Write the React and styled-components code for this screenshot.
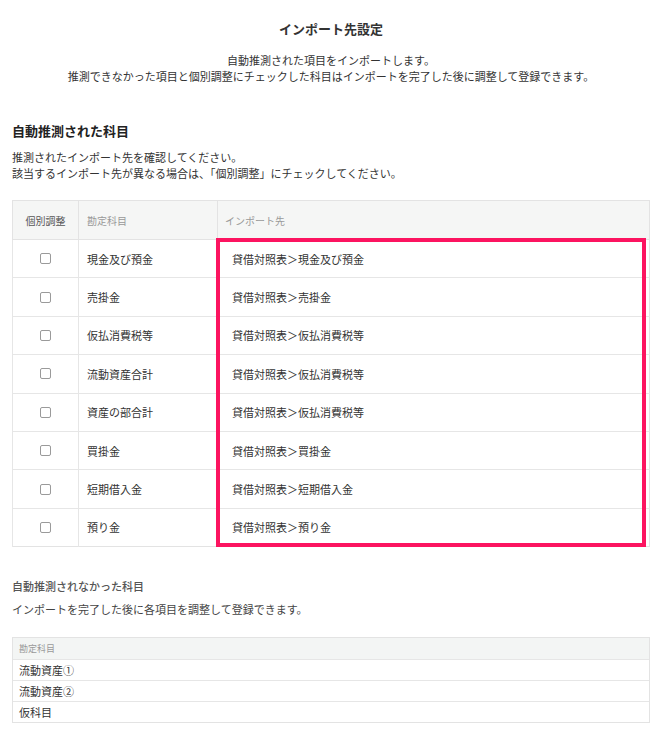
import { styled, createGlobalStyle } from "styled-components";

const GlobalStyle = createGlobalStyle`
  body {
    margin: 0;
    background: #ffffff;
    font-family: "Noto Sans CJK JP", "Noto Sans", sans-serif;
    color: #333333;
  }
`;

const autoRows = [
  { name: "現金及び預金", target: "貸借対照表＞現金及び預金" },
  { name: "売掛金", target: "貸借対照表＞売掛金" },
  { name: "仮払消費税等", target: "貸借対照表＞仮払消費税等" },
  { name: "流動資産合計", target: "貸借対照表＞仮払消費税等" },
  { name: "資産の部合計", target: "貸借対照表＞仮払消費税等" },
  { name: "買掛金", target: "貸借対照表＞買掛金" },
  { name: "短期借入金", target: "貸借対照表＞短期借入金" },
  { name: "預り金", target: "貸借対照表＞預り金" },
];

const manualRows = ["流動資産①", "流動資産②", "仮科目"];

const App = () => {
  return (
    <Page>
      <GlobalStyle />
      <Title>インポート先設定</Title>
      <Lead>
        自動推測された項目をインポートします。
        <br />
        推測できなかった項目と個別調整にチェックした科目はインポートを完了した後に調整して登録できます。
      </Lead>

      <SectionTitle>自動推測された科目</SectionTitle>
      <Note>
        推測されたインポート先を確認してください。
        <br />
        該当するインポート先が異なる場合は、「個別調整」にチェックしてください。
      </Note>

      <TableWrap>
        <Table>
          <colgroup>
            <col style={{ width: 66 }} />
            <col style={{ width: 139 }} />
            <col />
          </colgroup>
          <thead>
            <tr>
              <Th $center $dark>個別調整</Th>
              <Th>勘定科目</Th>
              <Th $wide>インポート先</Th>
            </tr>
          </thead>
          <tbody>
            {autoRows.map((row) => (
              <tr key={row.name}>
                <Td $center>
                  <Check type="checkbox" />
                </Td>
                <Td>{row.name}</Td>
                <Td $wide>{row.target}</Td>
              </tr>
            ))}
          </tbody>
        </Table>
        <Highlight />
      </TableWrap>

      <SubTitle>自動推測されなかった科目</SubTitle>
      <SubNote>インポートを完了した後に各項目を調整して登録できます。</SubNote>

      <ListTable>
        <ListHead>勘定科目</ListHead>
        {manualRows.map((name) => (
          <ListRow key={name}>{name}</ListRow>
        ))}
      </ListTable>
    </Page>
  );
};

const Page = styled.div`
  display: flex;
  flex-direction: column;
  padding: 20px 13px 11px 12px;
`;

const Title = styled.h1`
  margin: 0;
  text-align: center;
  font-size: 13px;
  line-height: 18px;
  font-weight: 700;
  color: #333;
`;

const Lead = styled.p`
  margin: 14px 0 0;
  text-align: center;
  font-size: 11px;
  line-height: 16px;
  color: #333;
`;

const SectionTitle = styled.h2`
  margin: 38px 0 0;
  font-size: 13px;
  line-height: 18px;
  font-weight: 700;
  color: #222;
`;

const Note = styled.p`
  margin: 9px 0 0;
  font-size: 11px;
  line-height: 16px;
  color: #333;
`;

const TableWrap = styled.div`
  position: relative;
  margin-top: 19px;
`;

const Table = styled.table`
  width: 100%;
  border-collapse: collapse;
  table-layout: fixed;
  border: 1px solid #e3e3e3;
`;

const Th = styled.th`
  height: 38px;
  padding: 0 ${({ $wide }) => ($wide ? "7px" : "8px")};
  background: #f5f6f5;
  border: 1px solid #e3e3e3;
  text-align: ${({ $center }) => ($center ? "center" : "left")};
  font-size: 10px;
  font-weight: 400;
  color: ${({ $dark }) => ($dark ? "#555" : "#999")};
`;

const Td = styled.td`
  height: 37.4px;
  padding: 0 ${({ $wide }) => ($wide ? "14px" : "8px")};
  border-top: 1px solid #e6e6e6;
  border-left: 1px solid #e6e6e6;
  text-align: ${({ $center }) => ($center ? "center" : "left")};
  font-size: 11px;
  color: #333;
`;

const Check = styled.input`
  appearance: none;
  display: block;
  margin: 0 auto;
  width: 11px;
  height: 11px;
  border: 1px solid #9a9a9a;
  border-radius: 2px;
  background: #fff;
`;

const Highlight = styled.div`
  position: absolute;
  left: 204px;
  top: 38px;
  width: 430px;
  height: 309px;
  box-sizing: border-box;
  border: 4px solid #fc1460;
  pointer-events: none;
`;

const SubTitle = styled.h3`
  margin: 31px 0 0;
  font-size: 11px;
  line-height: 16px;
  font-weight: 500;
  color: #555;
`;

const SubNote = styled.p`
  margin: 7px 0 0;
  font-size: 11px;
  line-height: 16px;
  color: #444;
`;

const ListTable = styled.div`
  display: flex;
  flex-direction: column;
  margin-top: 20px;
  border: 1px solid #e3e3e3;
`;

const ListHead = styled.div`
  display: flex;
  align-items: center;
  height: 21px;
  padding: 0 6px;
  background: #f3f5f4;
  font-size: 9px;
  color: #999;
`;

const ListRow = styled.div`
  display: flex;
  align-items: center;
  height: 20px;
  padding: 0 6px;
  border-top: 1px solid #e6e6e6;
  font-size: 11px;
  color: #333;
`;

export default App;
